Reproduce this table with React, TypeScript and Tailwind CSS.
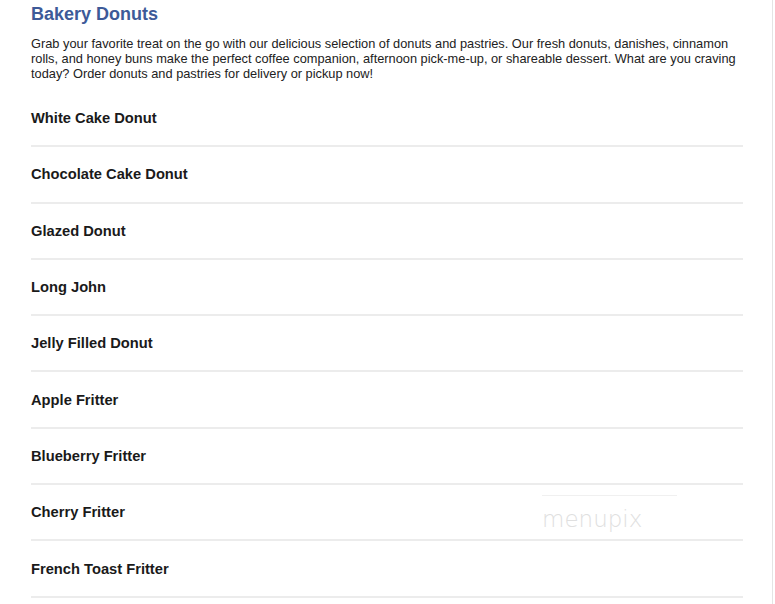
const items = [
  "White Cake Donut",
  "Chocolate Cake Donut",
  "Glazed Donut",
  "Long John",
  "Jelly Filled Donut",
  "Apple Fritter",
  "Blueberry Fritter",
  "Cherry Fritter",
  "French Toast Fritter",
];

function Watermark() {
  return (
    <div className="pointer-events-none absolute left-[542px] top-[495px] flex flex-col items-start">
      <div className="h-px w-[135px] bg-[#f0f0f0]" />
      <span className="mt-[9px] font-['DejaVu_Sans',sans-serif] text-[23px] font-extralight leading-[28px] text-[#e0e0e0]">
        menupix
      </span>
    </div>
  );
}

export default function App() {
  return (
    <div className="relative flex h-[604px] w-[775px] overflow-hidden bg-white font-['Liberation_Sans',Arial,sans-serif]">
      <main className="w-[743px] shrink-0 pl-[31px] pt-[3px]">
        <h1 className="text-[18px] font-bold leading-[22px] text-[#3d5a98]">Bakery Donuts</h1>
        <p className="mt-[11px] whitespace-nowrap text-[12.8px] leading-[15px] text-[#222]">
          Grab your favorite treat on the go with our delicious selection of donuts and pastries. Our fresh donuts, danishes, cinnamon
          <br />
          rolls, and honey buns make the perfect coffee companion, afternoon pick-me-up, or shareable dessert. What are you craving
          <br />
          today? Order donuts and pastries for delivery or pickup now!
        </p>
        <ul className="mt-[10px] flex flex-col">
          {items.map((name) => (
            <li
              key={name}
              className="flex h-[56.3px] items-center border-b-2 border-[#ececec] text-[14.7px] font-bold text-[#1a1a1a]"
            >
              {name}
            </li>
          ))}
        </ul>
      </main>
      <div className="ml-auto mr-[2px] w-px bg-[#e4e4e4]" />
      <Watermark />
    </div>
  );
}
